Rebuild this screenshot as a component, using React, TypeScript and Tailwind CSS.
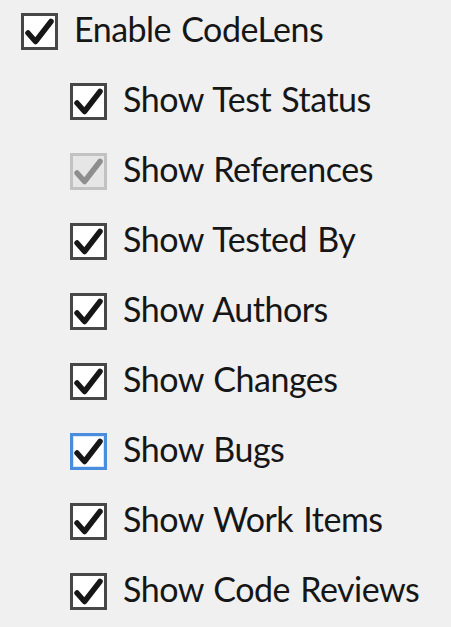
import React from "react";

type Variant = "normal" | "disabled" | "focus";

function Box({ variant }: { variant: Variant }) {
  const boxCls =
    variant === "disabled"
      ? "border-[3px] border-[#c2c2c2] bg-[#e6e6e6]"
      : variant === "focus"
      ? "border-[3px] border-[#4a8ddc] bg-white shadow-[inset_0_0_0_1px_#d4e6f8]"
      : "border-[3px] border-[#474747] bg-white";
  const stroke = variant === "disabled" ? "#8e8e8e" : "#161616";
  return (
    <div className={`w-[37px] h-[37px] shrink-0 flex items-center justify-center ${boxCls}`}>
      <svg width="31" height="31" viewBox="0 0 31 31">
        <path
          d="M4 17 L11.5 25.5 L27 5.5"
          fill="none"
          stroke={stroke}
          strokeWidth="5.5"
          strokeLinecap="round"
          strokeLinejoin="round"
        />
      </svg>
    </div>
  );
}

function Row({ label, variant = "normal", indent = false }: { label: string; variant?: Variant; indent?: boolean }) {
  return (
    <div className={`flex items-center h-[37px] ${indent ? "pl-[49px]" : ""}`}>
      <Box variant={variant} />
      <span className="ml-[16px] text-[34px] leading-none tracking-[-0.5px] [word-spacing:2px] text-[#161616] -translate-y-[3px] whitespace-nowrap">
        {label}
      </span>
    </div>
  );
}

export default function App() {
  const items: { label: string; variant?: Variant }[] = [
    { label: "Show Test Status" },
    { label: "Show References", variant: "disabled" },
    { label: "Show Tested By" },
    { label: "Show Authors" },
    { label: "Show Changes" },
    { label: "Show Bugs", variant: "focus" },
    { label: "Show Work Items" },
    { label: "Show Code Reviews" },
  ];
  return (
    <div
      className="w-[451px] h-[627px] bg-[#f0f0f0] pt-[13px] pl-[21px] flex flex-col gap-[33px] overflow-hidden"
      style={{ fontFamily: "Lato, 'Open Sans', sans-serif" }}
    >
      <Row label="Enable CodeLens" />
      {items.map((it) => (
        <Row key={it.label} label={it.label} variant={it.variant} indent />
      ))}
    </div>
  );
}
